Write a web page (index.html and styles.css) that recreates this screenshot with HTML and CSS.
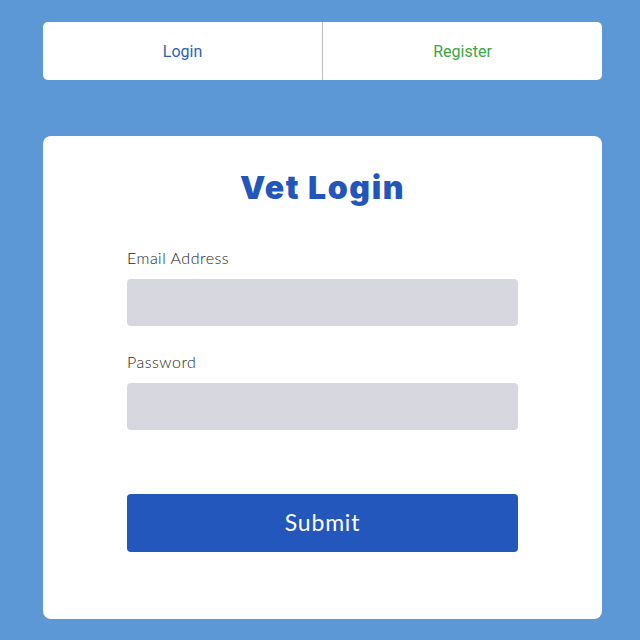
FILE: index.html
```html
<!DOCTYPE html>
<html>
<head>
<meta charset="utf-8">
<link rel="stylesheet" href="styles.css">
</head>
<body>
<div class="page">
  <nav class="tabs">
    <a class="tab tab-login">Login</a>
    <a class="tab tab-register">Register</a>
  </nav>
  <main class="card">
    <h1 class="title">Vet Login</h1>
    <form class="form">
      <label class="field">
        <span class="label">Email Address</span>
        <span class="input"></span>
      </label>
      <label class="field">
        <span class="label">Password</span>
        <span class="input"></span>
      </label>
      <button type="button" class="submit">Submit</button>
    </form>
  </main>
</div>
</body>
</html>
```
FILE: styles.css
```css
html, body {
  margin: 0;
  padding: 0;
  background: #5c98d6;
}
.page {
  width: 559px;
  margin-left: 43px;
  padding-top: 22px;
  display: flex;
  flex-direction: column;
  gap: 56px;
}
.tabs {
  display: flex;
  height: 58px;
  background: #fff;
  border-radius: 5px;
  font-family: Roboto, "Liberation Sans", sans-serif;
  font-size: 16px;
}
.tab {
  flex: 1;
  display: flex;
  align-items: center;
  justify-content: center;
  padding-top: 1px;
}
.tab-login {
  color: #2f5eb5;
  border-right: 1px solid #bdbdbd;
}
.tab-register {
  color: #3aa544;
}
.card {
  background: #fff;
  border-radius: 8px;
  padding: 28px 84px 67px;
}
.title {
  margin: 0;
  text-align: center;
  font-family: Inter, Lato, sans-serif;
  font-weight: 900;
  font-size: 32px;
  line-height: 46px;
  color: #2256bb;
  letter-spacing: 1.6px;
  padding-top: 1px;
}
.form {
  display: flex;
  flex-direction: column;
  margin-top: 37px;
}
.field {
  display: flex;
  flex-direction: column;
  gap: 11px;
  margin-bottom: 26px;
}
.label {
  font-family: Lato, "Open Sans", sans-serif;
  font-weight: 300;
  font-size: 16px;
  line-height: 20px;
  color: #222;
  letter-spacing: 0.5px;
}
.input {
  height: 47px;
  background: #d7d7e0;
  border-radius: 4px;
}
.submit {
  margin-top: 38px;
  height: 58px;
  padding-bottom: 3px;
  border: 0;
  border-radius: 4px;
  background: #2357bb;
  color: #fff;
  font-family: Lato, "Open Sans", sans-serif;
  font-size: 23px;
  font-weight: 400;
  letter-spacing: 0.8px;
}
```
